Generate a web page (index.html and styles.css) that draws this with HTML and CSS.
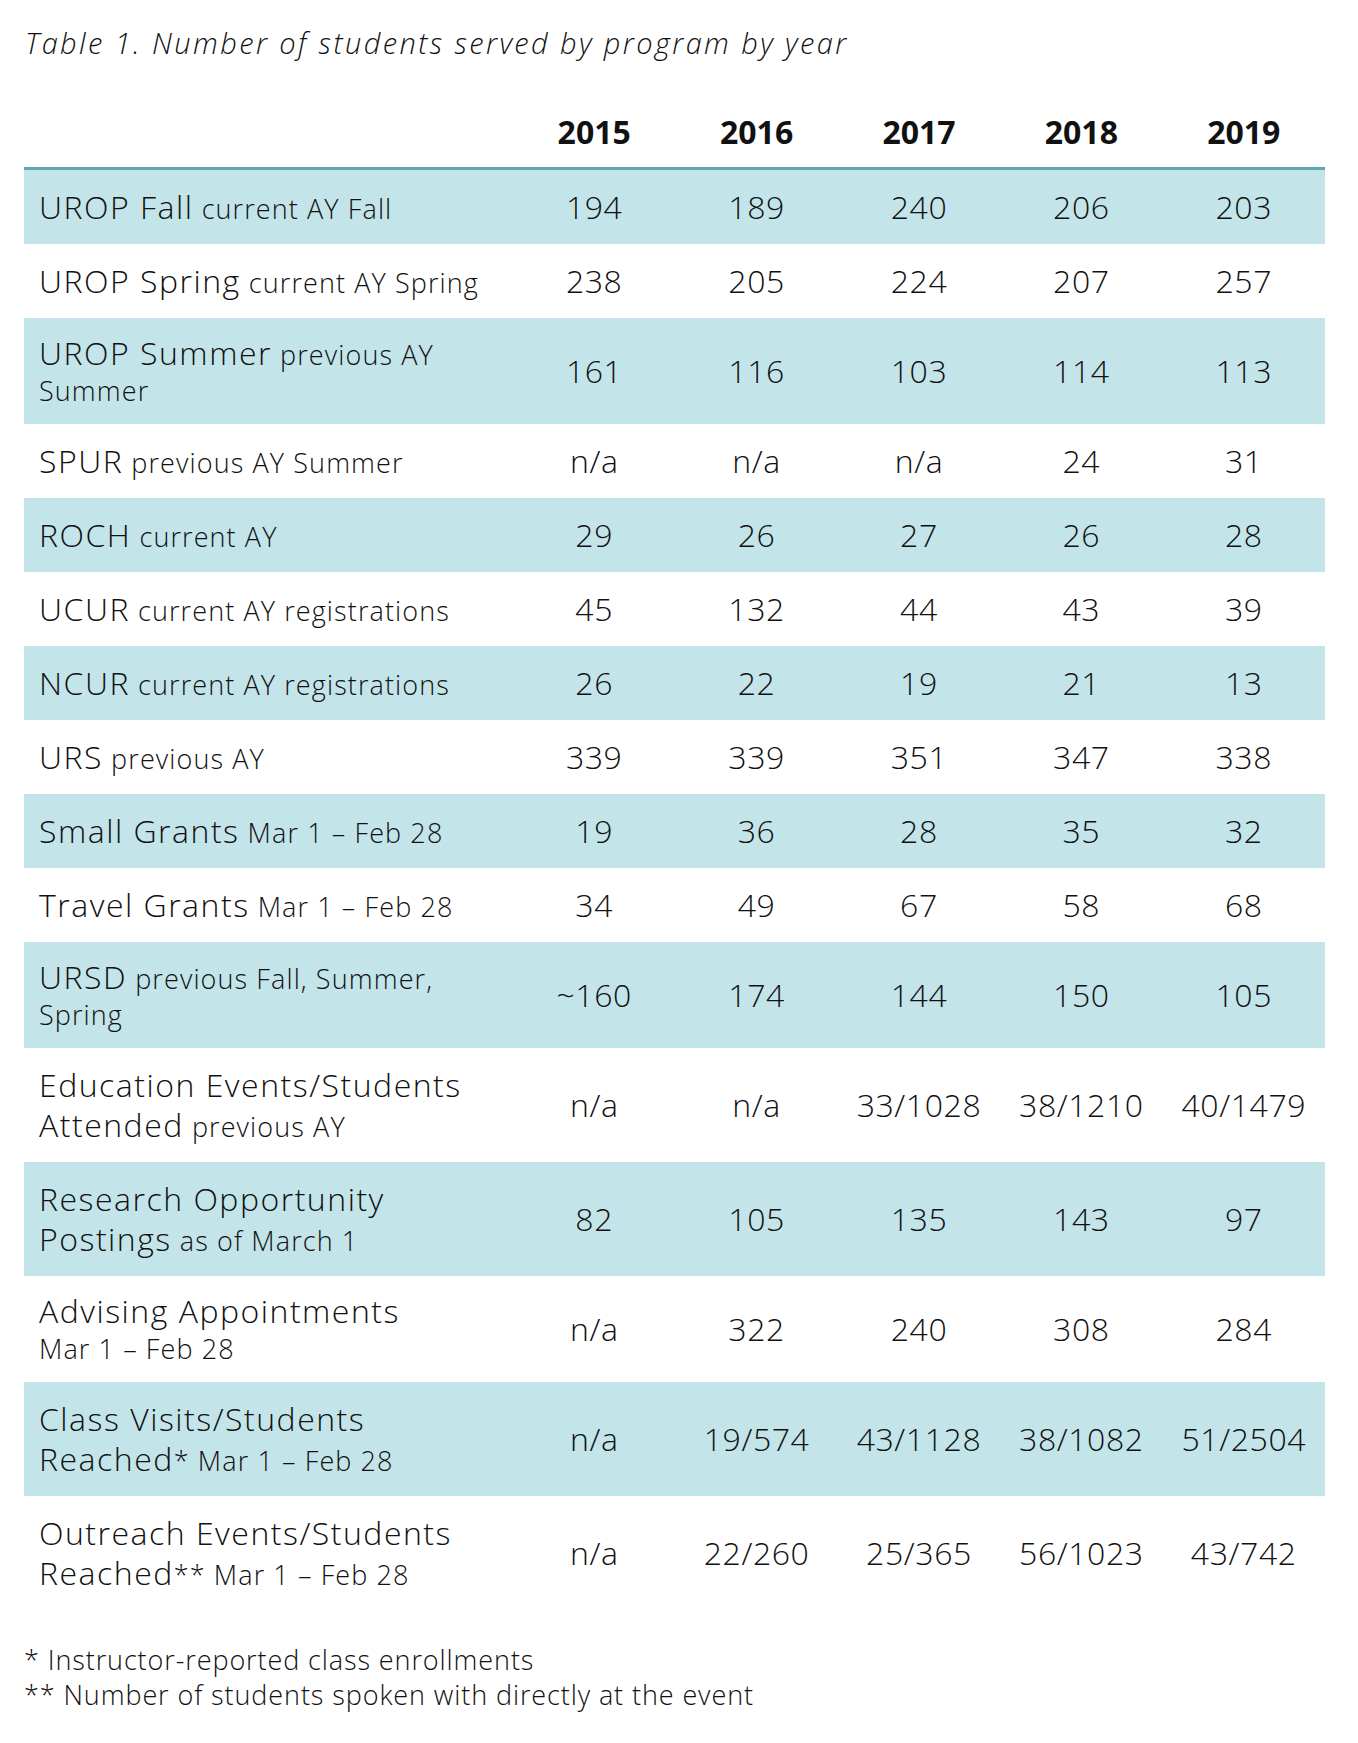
FILE: index.html
```html
<!DOCTYPE html>
<html lang="en">
<head>
<meta charset="utf-8">
<title>Table 1. Number of students served by program by year</title>
<link rel="stylesheet" href="styles.css">
</head>
<body>
<div class="page">
  <p class="caption">Table 1. Number of students served by program by year</p>
  <table class="data">
    <colgroup>
      <col class="col-label">
      <col><col><col><col><col>
    </colgroup>
    <thead>
      <tr>
        <th class="blank"></th>
        <th>2015</th><th>2016</th><th>2017</th><th>2018</th><th>2019</th>
      </tr>
    </thead>
    <tbody>
      <tr class="shade">
        <td class="label"><span class="big">UROP Fall</span> current AY Fall</td>
        <td>194</td><td>189</td><td>240</td><td>206</td><td>203</td>
      </tr>
      <tr>
        <td class="label"><span class="big">UROP Spring</span> current AY Spring</td>
        <td>238</td><td>205</td><td>224</td><td>207</td><td>257</td>
      </tr>
      <tr class="shade">
        <td class="label two"><span class="big">UROP Summer</span> previous AY<br>Summer</td>
        <td>161</td><td>116</td><td>103</td><td>114</td><td>113</td>
      </tr>
      <tr>
        <td class="label"><span class="big">SPUR</span> previous AY Summer</td>
        <td>n/a</td><td>n/a</td><td>n/a</td><td>24</td><td>31</td>
      </tr>
      <tr class="shade">
        <td class="label"><span class="big">ROCH</span> current AY</td>
        <td>29</td><td>26</td><td>27</td><td>26</td><td>28</td>
      </tr>
      <tr>
        <td class="label"><span class="big">UCUR</span> current AY registrations</td>
        <td>45</td><td>132</td><td>44</td><td>43</td><td>39</td>
      </tr>
      <tr class="shade">
        <td class="label"><span class="big">NCUR</span> current AY registrations</td>
        <td>26</td><td>22</td><td>19</td><td>21</td><td>13</td>
      </tr>
      <tr>
        <td class="label"><span class="big">URS</span> previous AY</td>
        <td>339</td><td>339</td><td>351</td><td>347</td><td>338</td>
      </tr>
      <tr class="shade">
        <td class="label"><span class="big">Small Grants</span> Mar 1 – Feb 28</td>
        <td>19</td><td>36</td><td>28</td><td>35</td><td>32</td>
      </tr>
      <tr>
        <td class="label"><span class="big">Travel Grants</span> Mar 1 – Feb 28</td>
        <td>34</td><td>49</td><td>67</td><td>58</td><td>68</td>
      </tr>
      <tr class="shade">
        <td class="label two"><span class="big">URSD</span> previous Fall, Summer,<br>Spring</td>
        <td>~160</td><td>174</td><td>144</td><td>150</td><td>105</td>
      </tr>
      <tr>
        <td class="label"><span class="big">Education Events/Students</span><br><span class="big">Attended</span> previous AY</td>
        <td>n/a</td><td>n/a</td><td>33/1028</td><td>38/1210</td><td>40/1479</td>
      </tr>
      <tr class="shade">
        <td class="label"><span class="big">Research Opportunity</span><br><span class="big">Postings</span> as of March 1</td>
        <td>82</td><td>105</td><td>135</td><td>143</td><td>97</td>
      </tr>
      <tr>
        <td class="label two"><span class="big">Advising Appointments</span><br>Mar 1 – Feb 28</td>
        <td>n/a</td><td>322</td><td>240</td><td>308</td><td>284</td>
      </tr>
      <tr class="shade">
        <td class="label"><span class="big">Class Visits/Students</span><br><span class="big">Reached</span>* Mar 1 – Feb 28</td>
        <td>n/a</td><td>19/574</td><td>43/1128</td><td>38/1082</td><td>51/2504</td>
      </tr>
      <tr>
        <td class="label"><span class="big">Outreach Events/Students</span><br><span class="big">Reached</span>** Mar 1 – Feb 28</td>
        <td>n/a</td><td>22/260</td><td>25/365</td><td>56/1023</td><td>43/742</td>
      </tr>
    </tbody>
  </table>
  <div class="notes">
    <p>* Instructor-reported class enrollments</p>
    <p>** Number of students spoken with directly at the event</p>
  </div>
</div>
</body>
</html>
```

FILE: styles.css
```css
html, body {
  margin: 0;
  padding: 0;
  background: #ffffff;
}

body {
  font-family: "Open Sans", "Liberation Sans", sans-serif;
  color: #111111;
  font-weight: 300;
}

.page {
  padding: 24px 0 0 24px;
  width: 1301px;
}

.caption {
  margin: 0;
  font-size: 29px;
  font-style: italic;
  line-height: 37px;
  letter-spacing: 2.4px;
  padding-left: 1px;
}

.data {
  width: 1301px;
  border-collapse: collapse;
  table-layout: fixed;
}

.col-label {
  width: 489px;
}

.data th {
  font-size: 32px;
  font-weight: 700;
  line-height: 40px;
  padding: 51px 0 15px;
  text-align: center;
  border-bottom: 3px solid #5fa8b0;
}

.data td {
  padding: 17px 0;
  font-size: 32px;
  line-height: 40px;
  letter-spacing: 0.6px;
  text-align: center;
  vertical-align: middle;
}

.data td.label {
  text-align: left;
  padding-left: 15px;
  font-size: 27px;
  line-height: 32px;
  letter-spacing: 1.1px;
  white-space: nowrap;
}

.data td.label.two {
  line-height: 36px;
  padding-top: 15px;
  padding-bottom: 15px;
}

.big {
  font-size: 32px;
  line-height: 40px;
  letter-spacing: 1.5px;
}

.shade td {
  background: #c3e5e9;
}

.notes {
  margin-top: 32px;
}

.notes p {
  margin: 0;
  font-size: 27px;
  line-height: 35px;
  letter-spacing: 0.9px;
}
```
